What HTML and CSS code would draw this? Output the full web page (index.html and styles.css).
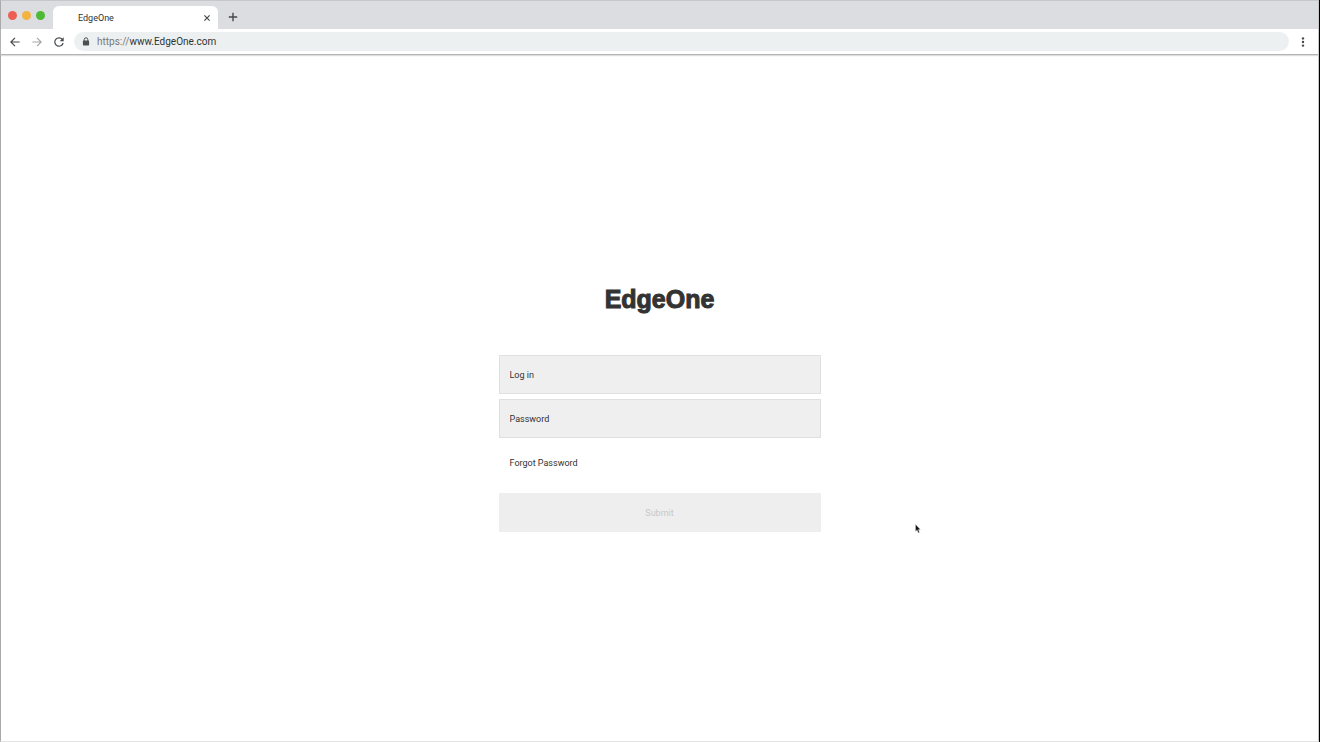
FILE: index.html
```html
<!DOCTYPE html>
<html lang="en">
<head>
    <meta charset="UTF-8">
    <meta name="viewport" content="width=device-width, initial-scale=1.0">
    <title>EdgeOne</title>
    <link rel="stylesheet" href="styles.css">
</head>
<body>
    <div class="browser">
        <header class="tab-bar">
            <div class="lights">
                <span class="light red"></span>
                <span class="light yellow"></span>
                <span class="light green"></span>
            </div>
            <div class="tab">
                <span>EdgeOne</span>
                <button type="button" class="icon-button" aria-label="Close tab">
                    <svg width="8" height="8" viewBox="0 0 8 8"><path d="M1.4 1.4l5.2 5.2M6.6 1.4L1.4 6.6" stroke="#46494c" stroke-width="1.2"/></svg>
                </button>
            </div>
            <button type="button" class="icon-button new-tab" aria-label="New tab">
                <svg width="10" height="10" viewBox="0 0 10 10"><path d="M5 .8v8.4M.8 5h8.4" stroke="#46494c" stroke-width="1.4"/></svg>
            </button>
        </header>

        <div class="toolbar">
            <button type="button" class="icon-button" aria-label="Back">
                <svg width="10" height="10" viewBox="0 0 10 10" fill="none" stroke="#46494c" stroke-width="1.2"><path d="M9.6 5H1M5 .8L.8 5 5 9.2"/></svg>
            </button>
            <button type="button" class="icon-button" aria-label="Forward">
                <svg width="10" height="10" viewBox="0 0 10 10" fill="none" stroke="#a4a6a8" stroke-width="1.2"><path d="M.4 5H9M5 .8L9.2 5 5 9.2"/></svg>
            </button>
            <button type="button" class="icon-button" aria-label="Reload">
                <svg width="10" height="10" viewBox="0 0 10 10"><path d="M8.3 2.4A4.2 4.2 0 1 0 9.1 6" fill="none" stroke="#46494c" stroke-width="1.2"/><path d="M9.7.3v4H5.7z" fill="#46494c"/></svg>
            </button>
            <div class="address">
                <svg width="8" height="9" viewBox="0 0 8 9"><path d="M2.2 4V2.6a1.8 1.8 0 0 1 3.6 0V4" fill="none" stroke="#4c5054" stroke-width="1"/><rect x=".9" y="3.4" width="6.2" height="5" rx=".6" fill="#4c5054"/></svg>
                <span class="url"><span class="scheme">https://</span>www.EdgeOne.com</span>
            </div>
            <button type="button" class="icon-button" aria-label="Menu">
                <svg width="4" height="10" viewBox="0 0 4 10" fill="#46494c"><circle cx="2" cy="1.4" r="1.2"/><circle cx="2" cy="5" r="1.2"/><circle cx="2" cy="8.6" r="1.2"/></svg>
            </button>
        </div>

        <main class="page">
            <form class="login">
                <h1>EdgeOne</h1>
                <input type="text" name="login" placeholder="Log in" aria-label="Log in">
                <input type="password" name="password" placeholder="Password" aria-label="Password">
                <a href="#">Forgot Password</a>
                <button type="submit" class="submit" disabled>Submit</button>
            </form>
            <svg class="cursor" width="6" height="10" viewBox="0 0 6 10"><path d="M.6.6v6.6l1.5-1.3 1.2 2.8 1.1-.5-1.1-2.7h2z" fill="#111" stroke="#bbb" stroke-width=".4"/></svg>
        </main>
    </div>
</body>
</html>
```

FILE: styles.css
```css
* {
    box-sizing: border-box;
}
body {
    margin: 0;
    font-family: Roboto, Arial, sans-serif;
    font-size: 9px;
    color: #303336;
    background-color: #000;
}
.browser {
    display: flex;
    flex-direction: column;
    min-height: 100vh;
    margin-right: 1px;
    background-color: #fff;
    border: 1px solid #aaa;
    border-top-color: #c6c7ca;
    border-right-color: #c8c8c8;
    border-bottom-color: #e4e4e4;
}
.icon-button {
    display: flex;
    padding: 0;
    border: none;
    background: none;
}

/* Tabs */
.tab-bar {
    display: flex;
    align-items: flex-end;
    height: 28px;
    background-color: #dcdde1;
}
.lights {
    display: flex;
    gap: 5px;
    width: 52px;
    padding: 0 0 9px 7px;
}
.light {
    width: 9px;
    height: 9px;
    border-radius: 50%;
}
.red {
    background-color: #ec5f57;
}
.yellow {
    background-color: #f3b340;
}
.green {
    background-color: #4cba35;
}
.tab {
    display: flex;
    align-items: center;
    justify-content: space-between;
    width: 165px;
    height: 23px;
    padding: 0 7px 0 25px;
    background-color: #fff;
    border-radius: 6px 6px 0 0;
}
.new-tab {
    padding: 0 10px 7px;
}

/* Address bar */
.toolbar {
    display: flex;
    align-items: center;
    gap: 12px;
    height: 26px;
    padding: 0 13px 0 9px;
    border-bottom: 1px solid #b4b4b4;
    box-shadow: 0 1px 1px #ddd;
}
.address {
    display: flex;
    flex: 1;
    align-items: center;
    gap: 7px;
    height: 19px;
    margin-left: -2px;
    padding: 0 8px;
    background-color: #edf0f1;
    border-radius: 10px;
}
.url {
    font-size: 10px;
}
.scheme {
    color: #74787b;
}

/* Login page */
.page {
    display: flex;
    flex: 1;
    align-items: center;
    justify-content: center;
    position: relative;
}
.login {
    display: flex;
    flex-direction: column;
    width: 322px;
}
.login h1 {
    margin: 0 0 21px;
    font-family: "Liberation Sans", Arial, sans-serif;
    font-size: 25px;
    font-weight: bold;
    line-height: 69px;
    text-align: center;
    color: #333;
    -webkit-text-stroke: 1px #333;
}
.login input {
    height: 39px;
    margin-bottom: 5px;
    padding: 2px 10px 0;
    font: inherit;
    color: #333;
    background-color: #efefef;
    border: 1px solid #e0e0e0;
    border-radius: 0;
}
.login input::placeholder {
    color: #333;
    opacity: 1;
}
.login a {
    margin: 0 11px;
    padding-top: 1px;
    line-height: 39px;
    color: #333;
    text-decoration: none;
}
.submit {
    height: 39px;
    margin-top: 10px;
    padding-top: 2px;
    font: inherit;
    color: #c8c8c8;
    background-color: #eee;
    border: none;
}
.cursor {
    position: absolute;
    top: 469px;
    left: calc(50% + 255px);
}
```
